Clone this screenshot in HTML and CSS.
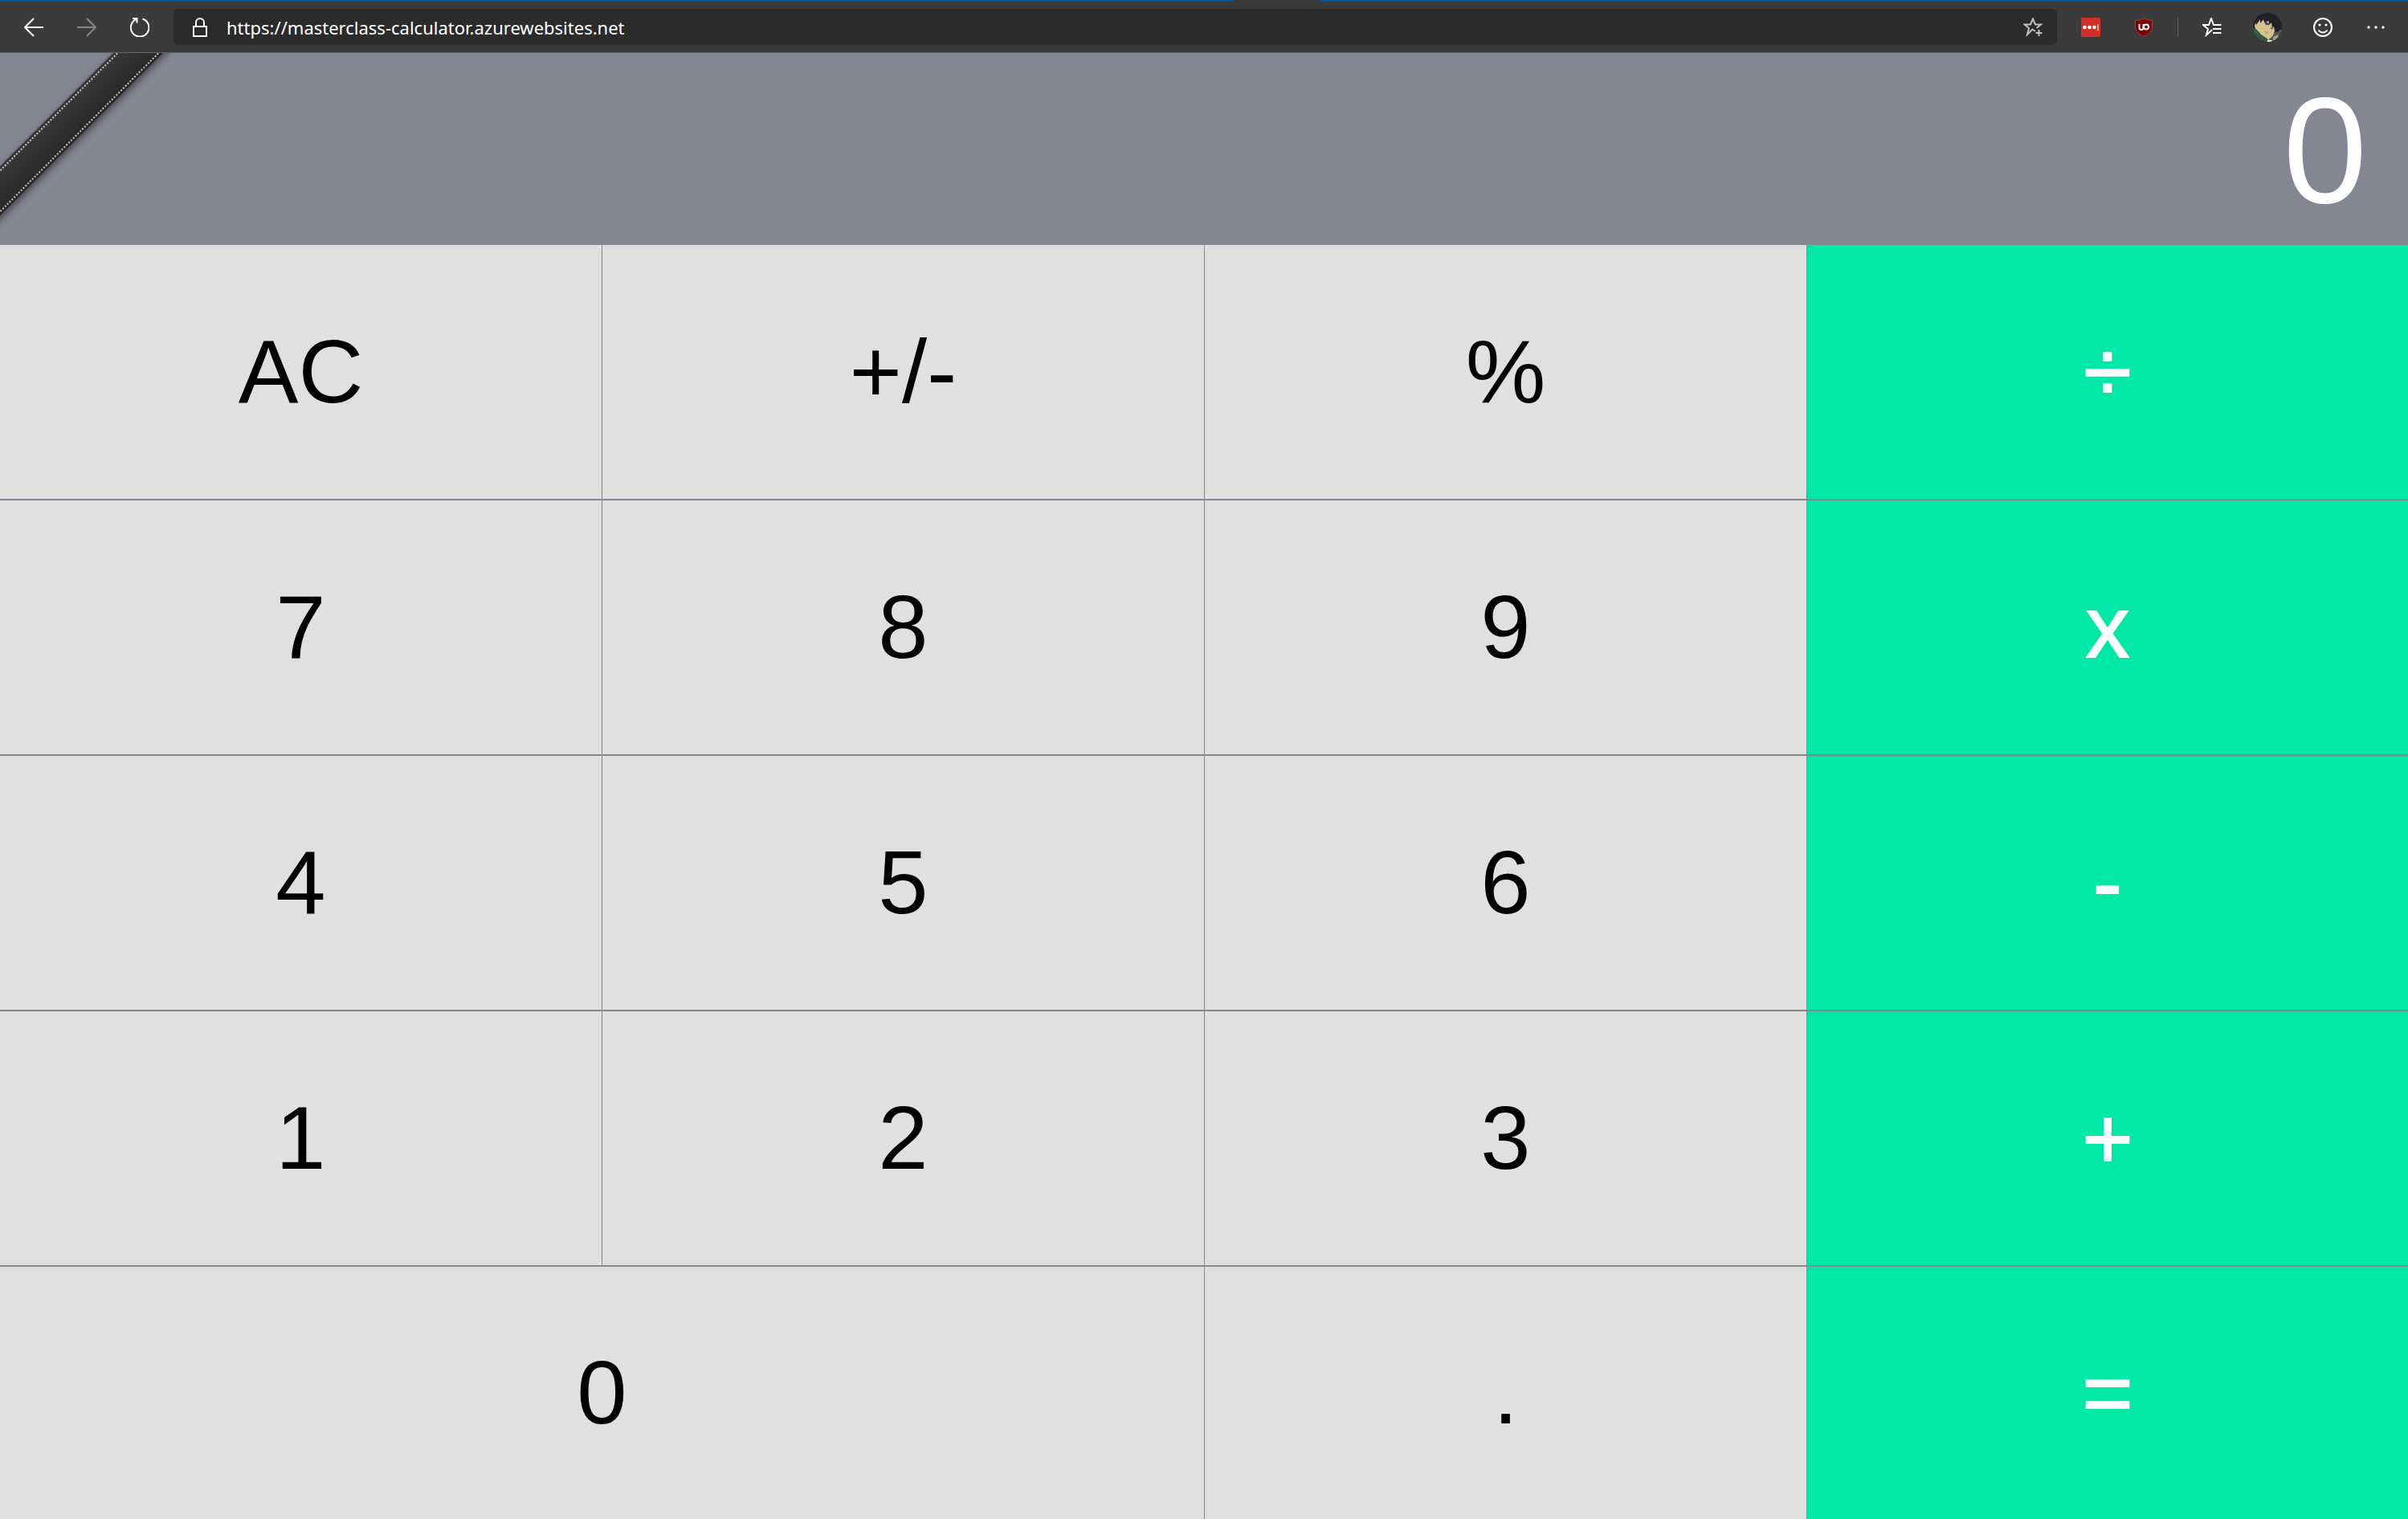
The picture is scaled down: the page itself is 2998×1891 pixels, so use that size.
FILE: index.html
```html
<!DOCTYPE html>
<html lang="en">
<head>
<meta charset="utf-8">
<title>Calculator</title>
<link rel="stylesheet" href="styles.css">
</head>
<body>
<header class="browser">
  <div class="tabstrip"><span class="tab"></span></div>
  <div class="toolbar">
    <nav class="nav">
      <button class="tool" aria-label="Back"><svg width="24" height="24" viewBox="0 0 24 24"><path d="M12 1 1 12l11 11M1 12h23"/></svg></button>
      <button class="tool dim" aria-label="Forward"><svg width="24" height="24" viewBox="0 0 24 24"><path d="M12 1l11 11-11 11M23 12H0"/></svg></button>
      <button class="tool" aria-label="Refresh"><svg width="24" height="24" viewBox="0 0 24 24"><path d="M15.500 1.500A11.300 11.300 0 1 1 8.500 1.600M3 1h5.500v5.500"/></svg></button>
    </nav>
    <form class="address">
      <svg width="18" height="24" viewBox="0 0 18 24"><path d="M1 11h16v12H1zM4 11V6a5 5 0 0 1 10 0v5"/></svg>
      <input class="url" aria-label="Address" value="https://masterclass-calculator.azurewebsites.net">
      <button type="button" class="fav" aria-label="Add to favorites"><svg width="24" height="24" viewBox="0 0 24 24"><path d="M15 17l-3.500-2.500L5 21l2-8-5.500-4.500h7.500L12 1.500l3 7h7l-5.500 4.500M19.500 15v8M15.500 19h8"/></svg></button>
    </form>
    <div class="actions">
      <button class="tool" aria-label="Password manager"><svg width="24" height="24" viewBox="0 0 24 24"><rect width="24" height="24" rx="2" fill="#d32d27" stroke="none"/><g fill="#fff" stroke="none"><circle cx="4.500" cy="12" r="2.300"/><circle cx="10.500" cy="12" r="2.300"/><circle cx="16.500" cy="12" r="2.300"/></g><path d="M21 8v8" stroke="#f0a09d"/></svg></button>
      <button class="tool" aria-label="Content blocker"><svg width="24" height="24" viewBox="0 0 24 24"><path d="M12 .5c3 2 7 3 10.500 3v8c0 6-5 9.500-10.500 12-5.500-2.500-10.500-6-10.500-12v-8C5 3.500 9 2.500 12 .5z" fill="#800000" stroke="#8c4b4b" stroke-width="1"/><path d="M6.500 8v4.500a2.500 2.500 0 0 0 5 0V8M12 11.500a3 3 0 0 1 3-3c4 0 4 6 0 6a3 3 0 0 1-3-3z"/></svg></button>
      <span class="divider"></span>
      <button class="tool" aria-label="Favorites"><svg width="24" height="24" viewBox="0 0 24 24"><path d="M10 17l-5 4.500L7 14 1 9h7l3-8 3 8h9.500M13 14h10.500M13 19h10.500M12 15l-2 2"/></svg></button>
      <button class="tool profile" aria-label="Profile"><svg width="36" height="36" viewBox="0 0 36 36"><defs><clipPath id="face"><circle cx="18" cy="18" r="18"/></clipPath></defs><g clip-path="url(#face)" stroke="none"><path fill="#262428" d="M0 0h36v36H0z"/><path fill="#4f5c4a" d="M24 26l12-6v16H18z"/><path fill="#98a396" d="M25 30l6-3 1 4-7 4z"/><path fill="#d6c28c" d="M3 12l4-4 8-2 11 9 2 5-3 8-6 6-7-4-8-8-2-5z"/><path fill="#fafafa" d="M16 34h8v2h-8z"/><path fill="#315b48" d="M0 19l5 2 5 6 8 5v4H0z"/><path fill="#222024" d="M3 12l3-8 8-4 14 2 7 9-1 9-4 5 0-7-3 5-1-6-2 2-1-7-4 4 1-6-6 2-1-4-4 5 0-5-5 7z"/><path fill="#3a3566" d="M14 11l4 1 1 3-3 0zM22 18l3 1-2 2z"/><path fill="#b79a80" d="M14 23l6 1-4 2z"/></g></svg></button>
      <button class="tool" aria-label="Send feedback"><svg width="24" height="24" viewBox="0 0 24 24"><circle cx="12" cy="12" r="11"/><path d="M6.500 15.500c3 4 8 4 11 0"/><g fill="#fff" stroke="none"><circle cx="8" cy="9" r="1.600"/><circle cx="16" cy="9" r="1.600"/></g></svg></button>
      <button class="tool" aria-label="Settings and more"><svg width="24" height="24" viewBox="0 0 24 24"><g fill="#fff" stroke="none"><circle cx="3" cy="12" r="1.700"/><circle cx="12" cy="12" r="1.700"/><circle cx="21" cy="12" r="1.700"/></g></svg></button>
    </div>
  </div>
</header>
<main class="calculator">
  <section class="display">
    <div class="ribbon"></div>
    <output class="result">0</output>
  </section>
  <section class="keypad">
    <button class="key">AC</button>
    <button class="key">+/-</button>
    <button class="key">%</button>
    <button class="key operator">÷</button>
    <button class="key">7</button>
    <button class="key">8</button>
    <button class="key">9</button>
    <button class="key operator">x</button>
    <button class="key">4</button>
    <button class="key">5</button>
    <button class="key">6</button>
    <button class="key operator">-</button>
    <button class="key">1</button>
    <button class="key">2</button>
    <button class="key">3</button>
    <button class="key operator">+</button>
    <button class="key last wide">0</button>
    <button class="key last">.</button>
    <button class="key last operator">=</button>
  </section>
</main>
</body>
</html>
```
FILE: styles.css
```css
* { box-sizing: border-box; }

body {
  margin: 0;
  min-height: 100vh;
  display: flex;
  flex-direction: column;
  background: #858694;
  font-family: "Liberation Sans", Arial, sans-serif;
}

button, input {
  margin: 0;
  padding: 0;
  border: 0;
  background: none;
  font: inherit;
  color: inherit;
}

/* Browser bar */
.browser {
  background: #3b3b3b;
  color: #fff;
  border-bottom: 1px solid #616166;
}

.tabstrip {
  height: 2px;
  background: #00569b;
  display: flex;
}

.tab {
  width: 108px;
  margin-left: 51.2%;
  background: #3b3b3b;
}

.toolbar {
  height: 63px;
  display: flex;
  align-items: center;
  padding: 0 7px 0 9px;
}

.toolbar svg {
  display: block;
  flex: none;
  fill: none;
  stroke: #fff;
  stroke-width: 2;
}

.nav, .actions {
  display: flex;
  align-items: center;
}

.tool {
  width: 66px;
  display: flex;
  justify-content: center;
}

.profile { width: 72px; }

.dim svg { stroke: #858585; }

.address {
  flex: 1;
  height: 45px;
  margin: 0 9px;
  padding: 0 18px 0 24px;
  display: flex;
  align-items: center;
  gap: 24px;
  border-radius: 5px;
  background: #2b2b2b;
}

.url {
  flex: 1;
  min-width: 0;
  height: 45px;
  font-family: "Noto Sans", "Open Sans", sans-serif;
  font-size: 22px;
}

.fav svg { stroke: #c0c0c0; }

.divider {
  width: 1px;
  height: 24px;
  margin: 0 9px;
  background: #626262;
}

/* Calculator */
.calculator {
  flex: 1;
  display: flex;
  flex-direction: column;
}

.display {
  position: relative;
  overflow: hidden;
  height: 239px;
  padding: 2px 51px 0;
  display: flex;
  align-items: center;
  justify-content: flex-end;
  color: #fff;
  font-size: 188px;
  line-height: 1;
}

.ribbon {
  position: absolute;
  top: 64px;
  left: -124px;
  width: 420px;
  height: 44px;
  transform: rotate(-45deg);
  background: linear-gradient(#383838, #292929);
  box-shadow: -2px 3px 8px rgba(0, 0, 0, 0.5);
}

.ribbon::after {
  content: "";
  position: absolute;
  inset: 3px 0;
  border: dotted #c8c8c8;
  border-width: 2px 0;
}

.keypad {
  flex: 1;
  display: grid;
  grid-template-columns: repeat(3, 375fr) 374fr;
  grid-template-rows: repeat(4, 159fr) 157fr;
}

.key {
  padding-bottom: 2px;
  border: solid #858694;
  border-width: 0 1px 2px 0;
  background: #e0e0e0;
  color: #000;
  font-size: 112px;
}

.wide { grid-column: span 2; }

.operator {
  border-right-width: 0;
  background: #00e8a8;
  color: #fff;
  font-size: 108px;
  -webkit-text-stroke: 2px #fff;
}

.last { border-bottom-width: 0; }
```
